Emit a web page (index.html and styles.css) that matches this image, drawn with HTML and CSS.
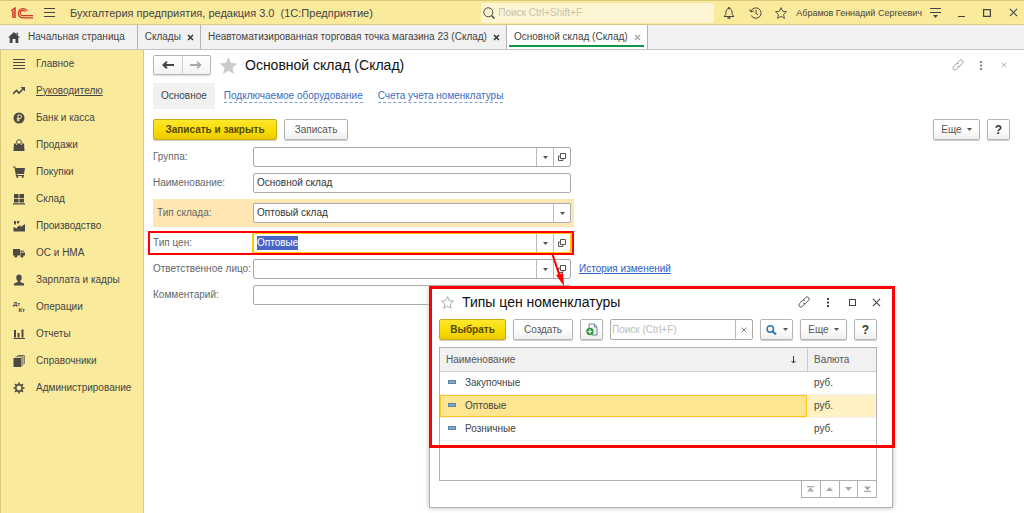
FILE: index.html
```html
<!DOCTYPE html>
<html lang="ru">
<head>
<meta charset="utf-8">
<title>Основной склад (Склад)</title>
<link rel="stylesheet" href="styles.css">
</head>
<body>
<svg class="defs" aria-hidden="true">
  <symbol id="close" viewBox="0 0 10 10"><path d="M1 1l8 8M9 1l-8 8" fill="none" stroke="currentColor" stroke-width="1.2"/></symbol>
  <symbol id="tabclose" viewBox="0 0 7 7"><path d="M1 1l5 5M6 1l-5 5" fill="none" stroke="currentColor" stroke-width="1.5"/></symbol>
  <symbol id="caret" viewBox="0 0 5 3"><path d="M0 0h5l-2.500 3z" fill="currentColor"/></symbol>
  <symbol id="open" viewBox="0 0 8 8"><path d="M2.500 .5h5v5h-5zM2.500 3h-2v4.500h4.500v-2" fill="none" stroke="currentColor"/></symbol>
  <symbol id="star" viewBox="0 0 20 20"><path d="M10 1l2.700 6.200 6.500.6-4.900 4.500 1.400 6.700-5.700-3.500-5.700 3.500 1.400-6.700L.8 7.800l6.500-.6z"/></symbol>
  <symbol id="link" viewBox="0 0 12 12"><g fill="none" stroke="currentColor" stroke-width=".9" stroke-linecap="round"><path d="M5 4.200L7.600 1.500a2 2 0 0 1 2.900 2.900L7.900 7.100a1.900 1.900 0 0 1-2.500.2"/><path d="M7 7.800L4.400 10.500a2 2 0 0 1-2.900-2.900L4.100 4.900a1.900 1.900 0 0 1 2.500-.2"/></g></symbol>
  <symbol id="dots" viewBox="0 0 2 9"><path d="M0 0h2v2H0zM0 3.500h2v2H0zM0 7h2v2H0z" fill="currentColor"/></symbol>
  <symbol id="box" viewBox="0 0 8 8"><path d="M.6.6h6.800v6.800H.6z" fill="none" stroke="currentColor" stroke-width="1.200"/></symbol>
  <symbol id="arrow-left" viewBox="0 0 12 8"><path d="M12 4H2M5 .8L1.500 4 5 7.200" fill="none" stroke="currentColor" stroke-width="2"/></symbol>
  <symbol id="arrow-right" viewBox="0 0 12 8"><path d="M0 4h10M7 .8L10.500 4 7 7.200" fill="none" stroke="currentColor" stroke-width="1.800"/></symbol>
</svg>

<header class="topbar">
  <svg class="logo" viewBox="0 0 22 12" fill="none" stroke="#d8302b"><path d="M0 3.800L4 1.200V11M2 4v7" stroke-width="1.500"/><path d="M16.300 4A4.900 4.600 0 1 0 12 10.900H22" stroke-width="1.300"/><path d="M14 4.800A2.600 2.600 0 1 0 12 8.600H22" stroke-width="1.200"/></svg>
  <button class="icon-btn burger" aria-label="Меню"><svg width="11" height="9" viewBox="0 0 11 9"><path d="M0 .5h11M0 4.500h11M0 8.500h11" stroke="currentColor"/></svg></button>
  <span class="app-title">Бухгалтерия предприятия, редакция 3.0 &nbsp;(1С:Предприятие)</span>
  <label class="search">
    <svg width="12" height="12" viewBox="0 0 12 12" fill="none" stroke="#444"><circle cx="5.300" cy="5.300" r="4.500"/><path d="M8.500 8.500l3 3" stroke-width="1.500"/></svg>
    <input type="text" placeholder="Поиск Ctrl+Shift+F" aria-label="Поиск">
  </label>
  <div class="top-tools">
    <button class="icon-btn" aria-label="Уведомления"><svg width="12" height="12" viewBox="0 0 12 12" fill="none" stroke="currentColor"><path d="M1 9.500c1.500-1 1.800-2 2-4.500C3.200 2.500 4.500 1.500 6 1.500S8.800 2.500 9 5c.2 2.500.5 3.500 2 4.500z"/><path d="M4.500 11h3M6 0v1.500" stroke-width="1.500"/></svg></button>
    <button class="icon-btn" aria-label="История"><svg width="13" height="12" viewBox="0 0 13 12" fill="none" stroke="currentColor"><path d="M2 4.300A5.200 5.200 0 1 1 2.300 8.500M.5 2.500L2 5l2.700-1M7 2.800V6.200l2 1.800"/></svg></button>
    <button class="icon-btn" aria-label="Избранное"><svg class="star-dark" width="12" height="12"><use href="#star"/></svg></button>
  </div>
  <span class="user">Абрамов Геннадий Сергеевич</span>
  <div class="win-tools">
    <button class="icon-btn" aria-label="Настройки"><svg width="11" height="10" viewBox="0 0 11 10"><path d="M0 .5h11M0 4.500h11" stroke="currentColor"/><path d="M3 7h5L5.500 10z" fill="currentColor"/></svg></button>
    <button class="icon-btn" aria-label="Свернуть"><svg width="8" height="8" viewBox="0 0 8 8"><path d="M1 7.500h7" stroke="currentColor"/></svg></button>
    <button class="icon-btn" aria-label="Развернуть"><svg width="8" height="8"><use href="#box"/></svg></button>
    <button class="icon-btn" aria-label="Закрыть"><svg width="9" height="9"><use href="#close"/></svg></button>
  </div>
</header>

<nav class="tabs" aria-label="Открытые окна">
  <a class="tab home" href="#"><svg width="12" height="11" viewBox="0 0 12 11"><path d="M6 0l6 5.500h-1.700V11H7.500V7h-3v4H1.700V5.500H0zM8.500.7H10V3L8.500 2z" fill="#444"/></svg>Начальная страница</a>
  <div class="tab"><a href="#">Склады</a><button class="icon-btn" aria-label="Закрыть"><svg width="7" height="7"><use href="#tabclose"/></svg></button></div>
  <div class="tab"><a href="#">Неавтоматизированная торговая точка магазина 23 (Склад)</a><button class="icon-btn" aria-label="Закрыть"><svg width="7" height="7"><use href="#tabclose"/></svg></button></div>
  <div class="tab active"><a href="#">Основной склад (Склад)</a><button class="icon-btn" aria-label="Закрыть"><svg width="7" height="7"><use href="#tabclose"/></svg></button></div>
</nav>

<div class="workspace">
  <nav class="sidebar" aria-label="Разделы">
    <a href="#"><svg viewBox="0 0 12 12"><path d="M0 1.500h12M0 4.500h12M0 7.500h12M0 10.500h12" stroke="#4d4a45"/></svg>Главное</a>
    <a href="#" class="current"><svg viewBox="0 0 12 12"><path d="M0 9l3.500-3.500L6 8l4.500-4.500" fill="none" stroke="#4d4a45" stroke-width="1.600"/><path d="M7.500 2H12v4.500z"/></svg>Руководителю</a>
    <a href="#"><svg viewBox="0 0 12 12"><circle cx="6" cy="6" r="5.500"/><path d="M5 9.500V3h1.700a1.600 1.600 0 0 1 0 3.500H3.800M3.800 8h3" fill="none" stroke="#faeb9c"/></svg>Банк и касса</a>
    <a href="#"><svg viewBox="0 0 12 12"><path d="M1 4.500h10l.5 7.500H.5z"/><path d="M3.700 6V3a2.300 2.300 0 0 1 4.600 0v3" fill="none" stroke="#4d4a45"/><path d="M3.700 4.500V6M8.300 4.500V6" stroke="#faeb9c"/></svg>Продажи</a>
    <a href="#"><svg viewBox="0 0 12 12"><path d="M0 .5h2.300l.4 1.500H12L11 8H3.800l.2 1h7v1H3L1.500 1.500H0z"/><circle cx="4.300" cy="10.800" r="1.100"/><circle cx="9.700" cy="10.800" r="1.100"/></svg>Покупки</a>
    <a href="#"><svg viewBox="0 0 12 12"><path d="M1 1h4.600v4H1zM6.400 1H11v4H6.400zM1 5.700h4.600v3.800H1zM6.400 5.700H11v3.800H6.400zM0 10.300h12v1.200H0z"/></svg>Склад</a>
    <a href="#"><svg viewBox="0 0 12 12"><path d="M.5 11.500V7L4 8.500V7l3.500-2v2L12 4v7.500zM1 1h2.300l-.6 3.500H1zM4.200 1h2.500L5.500 3.500H4z"/></svg>Производство</a>
    <a href="#"><svg viewBox="0 0 12 12"><path d="M0 2h7v6.500H0zM7.500 3.500H10l2 2.500v2.500H7.500z"/><circle cx="2.800" cy="9" r="1.600"/><circle cx="9" cy="9" r="1.600"/><path d="M8.700 4.500h1L10.700 6h-2z" fill="#faeb9c"/></svg>ОС и НМА</a>
    <a href="#"><svg viewBox="0 0 12 12"><ellipse cx="6" cy="3.800" rx="2.700" ry="3.300"/><path d="M1 11.500V9.500L4.800 8V6h2.400v2L11 9.500v2z"/></svg>Зарплата и кадры</a>
    <a href="#"><span class="dtkt" aria-hidden="true"><span>Дт</span><span>Кт</span></span>Операции</a>
    <a href="#"><svg viewBox="0 0 12 12"><path d="M1 2h2v7.500H1zM4.500 5h2v4.500h-2zM8.500 1.500h2v8h-2zM.5 10H12v1H.5z"/></svg>Отчеты</a>
    <a href="#"><svg viewBox="0 0 12 12"><path d="M.5 3h8v9h-8z"/><path d="M2.500 1.800h7.300V10.500M4.500.5h6.800V9" fill="none" stroke="#4d4a45" stroke-width=".8"/></svg>Справочники</a>
    <a href="#"><svg viewBox="0 0 12 12"><circle cx="6" cy="6" r="3.200" fill="none" stroke="#4d4a45" stroke-width="1.500"/><path d="M6 .5v2M6 9.500v2M.5 6h2M9.500 6h2M2.100 2.100l1.400 1.400M8.500 8.500l1.400 1.400M2.100 9.900l1.400-1.400M8.500 3.500l1.400-1.400" stroke="#4d4a45" stroke-width="1.700"/></svg>Администрирование</a>
  </nav>

  <main class="content">
    <div class="page-head">
      <div class="history">
        <button aria-label="Назад"><svg width="12" height="8"><use href="#arrow-left"/></svg></button>
        <button class="fwd" aria-label="Вперед"><svg width="12" height="8"><use href="#arrow-right"/></svg></button>
      </div>
      <button class="icon-btn" aria-label="В избранное"><svg class="star-fill" width="19" height="19"><use href="#star"/></svg></button>
      <h1>Основной склад (Склад)</h1>
      <div class="head-tools">
        <button class="icon-btn" aria-label="Ссылка"><svg width="12" height="12"><use href="#link"/></svg></button>
        <button class="icon-btn dim" aria-label="Еще"><svg width="2" height="9"><use href="#dots"/></svg></button>
        <button class="icon-btn" aria-label="Закрыть"><svg width="6" height="6"><use href="#close"/></svg></button>
      </div>
    </div>

    <nav class="subnav" aria-label="Карточка склада">
      <span class="here">Основное</span>
      <a href="#">Подключаемое оборудование</a>
      <a href="#">Счета учета номенклатуры</a>
    </nav>

    <div class="commands">
      <button class="btn primary save-close">Записать и закрыть</button>
      <button class="btn save">Записать</button>
      <button class="btn more push">Еще<svg width="5" height="3"><use href="#caret"/></svg></button>
      <button class="btn help">?</button>
    </div>

    <form class="fields">
      <div class="row">
        <label for="group">Группа:</label>
        <div class="combo"><input id="group" type="text"><button type="button" aria-label="Выбрать из списка"><svg width="5" height="3"><use href="#caret"/></svg></button><button type="button" aria-label="Открыть"><svg width="8" height="8"><use href="#open"/></svg></button></div>
      </div>
      <div class="row">
        <label for="name">Наименование:</label>
        <div class="combo"><input id="name" type="text" value="Основной склад"></div>
      </div>
      <div class="row band">
        <label for="kind">Тип склада:</label>
        <div class="combo picker"><select id="kind"><option>Оптовый склад</option></select><span class="drop"><svg width="5" height="3"><use href="#caret"/></svg></span></div>
      </div>
      <div class="row marked">
        <label for="price">Тип цен:</label>
        <div class="combo focus"><input id="price" type="text" value="Оптовые"><button type="button" aria-label="Выбрать из списка"><svg width="5" height="3"><use href="#caret"/></svg></button><button type="button" aria-label="Открыть"><svg width="8" height="8"><use href="#open"/></svg></button></div>
        <svg class="pointer" width="16" height="34" viewBox="0 0 16 34" aria-hidden="true"><path d="M2 0l8 24" stroke="#f00" stroke-width="2"/><path d="M6 22l7-2 1 13z" fill="#f00"/></svg>
      </div>
      <div class="row">
        <label for="person">Ответственное лицо:</label>
        <div class="combo"><input id="person" type="text"><button type="button" aria-label="Выбрать из списка"><svg width="5" height="3"><use href="#caret"/></svg></button><button type="button" aria-label="Открыть"><svg width="8" height="8"><use href="#open"/></svg></button></div>
        <a class="changes" href="#">История изменений</a>
      </div>
      <div class="row">
        <label for="note">Комментарий:</label>
        <div class="combo"><input id="note" type="text"></div>
      </div>
    </form>

    <section class="dialog" role="dialog" aria-labelledby="dlg-title">
      <div class="dlg-head">
        <button class="icon-btn" aria-label="В избранное"><svg class="star-line" width="13" height="13"><use href="#star"/></svg></button>
        <h2 id="dlg-title">Типы цен номенклатуры</h2>
        <div class="dlg-tools">
          <button class="icon-btn" aria-label="Ссылка"><svg width="12" height="12"><use href="#link"/></svg></button>
          <button class="icon-btn" aria-label="Еще"><svg width="2" height="9"><use href="#dots"/></svg></button>
          <button class="icon-btn" aria-label="Развернуть"><svg width="7" height="7"><use href="#box"/></svg></button>
          <button class="icon-btn" aria-label="Закрыть"><svg width="9" height="9"><use href="#close"/></svg></button>
        </div>
      </div>
      <div class="dlg-commands">
        <button class="btn primary choose">Выбрать</button>
        <button class="btn create">Создать</button>
        <button class="btn copy" aria-label="Скопировать"><svg width="12" height="13" viewBox="0 0 12 13"><path d="M3 6V1h5.500v3H11v8H6" fill="#f4f7fa" stroke="#6d8296"/><path d="M8.500 1L11 4" stroke="#6d8296"/><circle cx="4" cy="8.500" r="3.700" fill="#2c9a3c"/><path d="M4 6.300v4.400M1.800 8.500h4.400" stroke="#fff" stroke-width="1.200"/></svg></button>
        <div class="combo find"><input type="text" placeholder="Поиск (Ctrl+F)" aria-label="Поиск"><button aria-label="Очистить"><svg width="6" height="6"><use href="#close"/></svg></button></div>
        <button class="btn lens" aria-label="Поиск"><svg width="11" height="10" viewBox="0 0 11 10" fill="none" stroke="#2f76ad"><circle cx="4.300" cy="4" r="3.200" stroke-width="1.500"/><path d="M6.500 6.300L10 9.500" stroke-width="2"/></svg><svg width="5" height="3"><use href="#caret"/></svg></button>
        <button class="btn more">Еще<svg width="5" height="3"><use href="#caret"/></svg></button>
        <button class="btn help">?</button>
      </div>
      <div class="grid">
        <table>
          <thead><tr><th scope="col"><span class="sorted">Наименование<svg width="5" height="8" viewBox="0 0 5 8"><path d="M2.500 0v7M.5 5l2 2 2-2" fill="none" stroke="#333"/></svg></span></th><th scope="col" class="cur">Валюта</th></tr></thead>
          <tbody>
            <tr><td><span class="mark"></span>Закупочные</td><td>руб.</td></tr>
            <tr class="sel"><td><span class="mark"></span>Оптовые</td><td>руб.</td></tr>
            <tr><td><span class="mark"></span>Розничные</td><td>руб.</td></tr>
          </tbody>
        </table>
      </div>
      <div class="pager">
        <button aria-label="В начало"><svg width="7" height="6" viewBox="0 0 7 6"><path d="M0 0h7v1.200H0zM3.500 1.500L7 5.500H0z"/></svg></button>
        <button aria-label="Вверх"><svg width="7" height="6" viewBox="0 0 7 6"><path d="M3.500 1L7 5H0z"/></svg></button>
        <button aria-label="Вниз"><svg width="7" height="6" viewBox="0 0 7 6"><path d="M3.500 5L7 1H0z"/></svg></button>
        <button aria-label="В конец"><svg width="7" height="6" viewBox="0 0 7 6"><path d="M3.500 4.500L7 .5H0zM0 4.800h7V6H0z"/></svg></button>
      </div>
      <div class="outline" aria-hidden="true"></div>
    </section>
  </main>
</div>
<script src="app.js"></script>
</body>
</html>
```
FILE: styles.css
```css
* { box-sizing: border-box; }
body {
  margin: 0;
  min-height: 100vh;
  display: flex;
  flex-direction: column;
  font: 10px/14px "Liberation Sans", Arial, sans-serif;
  color: #444;
  background: #fff;
}
button, input, select { font: inherit; color: inherit; margin: 0; }
a { color: inherit; text-decoration: none; }
svg { display: block; flex: none; }
h1, h2 { margin: 0; font-weight: normal; color: #111; }
.defs { position: absolute; width: 0; height: 0; }
.icon-btn { display: flex; align-items: center; justify-content: center; padding: 0; border: 0; background: none; }

.topbar {
  display: flex;
  align-items: center;
  height: 25px;
  padding: 0 0 0 11px;
  background: #faeb9c;
  border-top: 1px solid #d9c77a;
  border-bottom: 1px solid #d6c885;
}
.logo { width: 22px; height: 12px; }
.burger { margin: 0 15px 0 11px; }
.app-title { font-size: 11px; white-space: nowrap; }
.search {
  display: flex;
  align-items: center;
  gap: 3px;
  width: 233px;
  height: 20px;
  margin-left: auto;
  padding-left: 2px;
  background: #fdf5d3;
  border-radius: 2px;
}
.search input { flex: 1; min-width: 0; padding: 0; border: 0; background: none; outline: 0; }
.search input::placeholder { color: #c9c3ad; opacity: 1; }
.top-tools { display: flex; margin-left: 2px; }
.top-tools .icon-btn { width: 26px; }
.star-dark { fill: none; stroke: #444; stroke-width: 1.5px; }
.user { font-size: 9px; white-space: nowrap; margin-left: 2px; }
.win-tools { display: flex; margin-right: -2px; }
.win-tools .icon-btn { width: 26px; }

.tabs { display: flex; height: 25px; background: #f1f1f1; border-bottom: 1px solid #c4c4c4; }
.tab { display: flex; align-items: center; gap: 6px; padding: 0 6px 0 7px; border-right: 1px solid #b4b4b4; white-space: nowrap; }
.tab.home { gap: 8px; padding: 0 12px 0 8px; }
.tab .icon-btn { color: #333; }
.tab.active { position: relative; background: #fff; }
.tab.active .icon-btn { color: #aaa; }
.tab.active::after { content: ""; position: absolute; left: 2px; right: 3px; bottom: 2px; height: 2px; background: #0c9a4a; }

.workspace { flex: 1; display: flex; }
.sidebar { width: 144px; flex: none; background: #faeb9c; border-left: 1px solid #d9c77a; border-right: 1px solid #d6c885; }
.sidebar a { display: flex; align-items: center; gap: 11px; height: 27px; padding-left: 12px; white-space: nowrap; }
.sidebar svg { width: 12px; height: 12px; fill: #4d4a45; }
.sidebar .current { text-decoration: underline; }
.dtkt { display: flex; flex-direction: column; width: 12px; font: bold 6px/6px "Liberation Sans", Arial, sans-serif; }
.dtkt span + span { align-self: flex-end; }

.content { position: relative; flex: 1; min-width: 0; padding: 5px 14px 0 9px; }
.page-head { display: flex; align-items: center; height: 20px; }
.history { display: flex; width: 58px; height: 20px; margin-right: 8px; border: 1px solid #b5b5b5; border-radius: 2px; box-shadow: 0 1px 1px #ddd; }
.history button { flex: 1; display: flex; align-items: center; justify-content: center; padding: 0; border: 0; background: linear-gradient(#fff, #f3f3f3); color: #444; }
.history .fwd { color: #aaa; border-left: 1px solid #d0d0d0; }
.star-fill { fill: #ccc; }
h1 { margin-left: 7px; font-size: 14px; line-height: 20px; }
.head-tools { display: flex; align-items: center; margin: 0 -5px 0 auto; color: #999; }
.head-tools .icon-btn { width: 23px; }
.head-tools .dim { color: #888; }

.subnav { display: flex; align-items: center; gap: 15px; margin-top: 8px; }
.subnav .here { margin-right: -6px; padding: 6px 8px; background: #f1f1f1; border-radius: 2px; }
.subnav a { color: #3a6cc0; border-bottom: 1px dashed #7f9fd6; line-height: 12px; }

.commands { display: flex; gap: 7px; margin-top: 10px; }
.btn {
  display: flex;
  align-items: center;
  justify-content: center;
  height: 21px;
  padding: 0;
  color: #555;
  border: 1px solid #b5b5b5;
  border-radius: 2px;
  background: linear-gradient(#fff 40%, #f0f0f0);
  box-shadow: 0 1px 1px #ccc;
}
.btn.primary { font-weight: bold; color: #54480c; border-color: #c9ac10; background: linear-gradient(#ffe72e, #f8db00 60%, #ecc900); }
.save-close { width: 124px; }
.save { width: 64px; }
.more { width: 47px; gap: 5px; }
.push { margin-left: auto; }
.help { width: 23px; font-weight: bold; color: #333; font-size: 12px; }

.fields { display: flex; flex-direction: column; gap: 6px; margin-top: 7px; }
.row { display: flex; align-items: center; color: #666; }
.row label { width: 100px; flex: none; white-space: nowrap; }
.combo { display: flex; width: 318px; height: 20px; color: #333; border: 1px solid #aaa; border-radius: 2px; background: #fff; }
.combo input, .combo select { flex: 1; min-width: 0; padding: 0 3px; border: 0; background: none; outline: 0; appearance: none; }
.combo button, .drop { display: flex; align-items: center; justify-content: center; width: 17px; padding: 0; border: 0; border-left: 1px solid #bbb; background: none; color: #555; }
.combo input::placeholder { color: #bbb; opacity: 1; }
.combo input::selection { background: #4a66c4; color: #fff; }
.band { width: 421px; padding: 4px 3px 4px 4px; background: #ffe6b3; }
.band label { width: 96px; }
.picker { position: relative; }
.drop { position: absolute; top: 0; right: 0; height: 100%; pointer-events: none; }
.marked { position: relative; width: 421px; }
.marked::after { content: ""; position: absolute; inset: -2px 0 -2px -5px; border: 2px solid #f00; pointer-events: none; }
.focus { border-color: #ffc800; box-shadow: 0 0 0 1px #ffc800; }
.pointer { position: absolute; left: 397px; top: 20px; z-index: 2; }
.changes { margin-left: 8px; color: #2a62c0; text-decoration: underline; }

.dialog {
  position: absolute;
  left: 285px;
  top: 237px;
  width: 464px;
  padding: 4px 15px 9px 9px;
  background: #fff;
  border: 1px solid #b0b0b0;
  box-shadow: 0 0 5px #bbb;
}
.outline { position: absolute; inset: -2px -3px 59px -1px; border: 3px solid #f00; pointer-events: none; }
.dlg-head { display: flex; align-items: center; height: 20px; padding-left: 2px; }
.star-line { fill: none; stroke: #aaa; stroke-width: 1.5px; }
h2 { margin-left: 8px; font-size: 14px; line-height: 20px; }
.dlg-tools { display: flex; margin: 0 -11px 0 auto; color: #444; }
.dlg-tools .icon-btn { width: 24px; }
.dlg-commands { display: flex; gap: 7px; margin-top: 7px; }
.choose { width: 67px; }
.create { width: 60px; }
.copy { width: 23px; }
.dlg-commands .find { flex: 1; min-width: 0; height: 21px; }
.find input { padding: 0 1px; }
.lens { width: 33px; gap: 6px; }
.grid { height: 134px; margin-top: 7px; border: 1px solid #b0b0b0; }
table { width: 100%; border-collapse: separate; border-spacing: 0; table-layout: fixed; }
th { height: 24px; padding: 0 6px; text-align: left; font-weight: normal; color: #555; background: #f1f1f1; border-bottom: 1px solid #ccc; }
.cur { width: 69px; border-left: 1px solid #ccc; }
.sorted { display: flex; align-items: center; justify-content: space-between; padding-right: 5px; }
td { height: 23px; padding: 0 8px; border-bottom: 1px solid #eee; }
tbody tr > td + td { padding-left: 7px; }
.sel td { background: #fef2c5; }
.sel td:first-child { background: #fee591; box-shadow: inset 0 0 0 1px #ffc61a; }
.mark { display: inline-block; width: 8px; height: 4px; margin-right: 9px; vertical-align: 2px; background: #7fa9c9; border: 1px solid #5a87a8; }
.pager { display: flex; width: 76px; margin-left: auto; border: 1px solid #b0b0b0; border-top: 0; }
.pager button { flex: 1; display: flex; align-items: center; justify-content: center; height: 16px; padding: 0; border: 0; background: #fff; fill: #aaa; }
.pager button + button { border-left: 1px solid #b0b0b0; }
```
FILE: app.js
```js
const price = document.getElementById('price');
price.focus();
price.select();
```
